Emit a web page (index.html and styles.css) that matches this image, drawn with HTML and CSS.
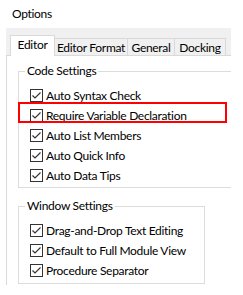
FILE: index.html
```html
<!DOCTYPE html>
<html>
<head>
<meta charset="utf-8">
<link rel="stylesheet" href="styles.css">
</head>
<body>
<div class="frame">
  <div class="title">Options</div>
  <div class="dialog">
    <div class="tabs">
      <div class="tab active">Editor</div>
      <div class="tab">Editor Format</div>
      <div class="tab">General</div>
      <div class="tab">Docking</div>
    </div>
    <div class="panel">
      <fieldset class="group code">
        <legend>Code Settings</legend>
        <div class="row"><span class="cb"><svg viewBox="0 0 11 11"><polyline points="1.5,5.5 4,8 9.5,2.5"/></svg></span><span>Auto Syntax Check</span></div>
        <div class="row marked"><span class="cb"><svg viewBox="0 0 11 11"><polyline points="1.5,5.5 4,8 9.5,2.5"/></svg></span><span>Require Variable Declaration</span><span class="highlight"></span></div>
        <div class="row"><span class="cb"><svg viewBox="0 0 11 11"><polyline points="1.5,5.5 4,8 9.5,2.5"/></svg></span><span>Auto List Members</span></div>
        <div class="row"><span class="cb"><svg viewBox="0 0 11 11"><polyline points="1.5,5.5 4,8 9.5,2.5"/></svg></span><span>Auto Quick Info</span></div>
        <div class="row"><span class="cb"><svg viewBox="0 0 11 11"><polyline points="1.5,5.5 4,8 9.5,2.5"/></svg></span><span>Auto Data Tips</span></div>
      </fieldset>
      <fieldset class="group window">
        <legend>Window Settings</legend>
        <div class="row"><span class="cb"><svg viewBox="0 0 11 11"><polyline points="1.5,5.5 4,8 9.5,2.5"/></svg></span><span>Drag-and-Drop Text Editing</span></div>
        <div class="row"><span class="cb"><svg viewBox="0 0 11 11"><polyline points="1.5,5.5 4,8 9.5,2.5"/></svg></span><span>Default to Full Module View</span></div>
        <div class="row"><span class="cb"><svg viewBox="0 0 11 11"><polyline points="1.5,5.5 4,8 9.5,2.5"/></svg></span><span>Procedure Separator</span></div>
      </fieldset>
    </div>
  </div>
</div>
</body>
</html>
```
FILE: styles.css
```css
body {
  margin: 0;
  background: #fff;
  font-family: "Lato", "Liberation Sans", sans-serif;
  font-size: 12px;
  letter-spacing: -0.3px;
  color: #000;
}
.frame {
  width: 231px;
  height: 285px;
  overflow: hidden;
}
.title {
  height: 28px;
  line-height: 28px;
  padding-left: 12px;
}
.dialog {
  margin-left: 6px;
  width: 240px;
  height: 257px;
  padding-top: 7px;
  box-sizing: border-box;
  background: #f0f0f0;
}
.tabs {
  display: flex;
  align-items: flex-end;
  height: 20px;
  padding-left: 4px;
}
.tab {
  height: 17px;
  box-sizing: border-box;
  padding: 0;
  text-align: center;
  line-height: 17px;
  border: 1px solid #d9d9d9;
  border-bottom: none;
  margin-left: -1px;
  white-space: nowrap;
}
.tab:nth-child(1) { width: 45px; margin-left: 0; }
.tab:nth-child(2) { width: 74px; }
.tab:nth-child(3) { width: 48px; }
.tab:nth-child(4) { width: 52px; }
.tab.active {
  position: relative;
  height: 21px;
  margin-bottom: -1px;
  line-height: 18px;
  background: #fff;
}
.panel {
  height: 230px;
  background: #fff;
  border-top: 1px solid #d9d9d9;
  border-left: 1px solid #d9d9d9;
  padding: 7px 0 0 11px;
  box-sizing: border-box;
}
.group {
  margin: 0;
  padding: 6px 0 2px 0;
  border: 1px solid #dcdcdc;
  min-width: 0;
}
.group legend {
  margin-left: 6px;
  padding: 0 2px;
  line-height: 16px;
}
.code {
  width: 230px;
  box-sizing: border-box;
}
.window {
  width: 187px;
  box-sizing: border-box;
  margin-top: 10px;
  padding-bottom: 3px;
}
.row {
  position: relative;
  display: flex;
  align-items: center;
  gap: 3px;
  height: 20px;
  padding-left: 11px;
  white-space: nowrap;
}
.cb {
  width: 13px;
  height: 13px;
  box-sizing: border-box;
  border: 1px solid #333;
  background: #fff;
  display: flex;
  flex: none;
}
.cb svg {
  width: 11px;
  height: 11px;
  fill: none;
  stroke: #333;
  stroke-width: 1.2;
}
.highlight {
  position: absolute;
  left: -1px;
  top: -3px;
  width: 209px;
  height: 21px;
  box-sizing: border-box;
  border: 2px solid #f00;
}
```
